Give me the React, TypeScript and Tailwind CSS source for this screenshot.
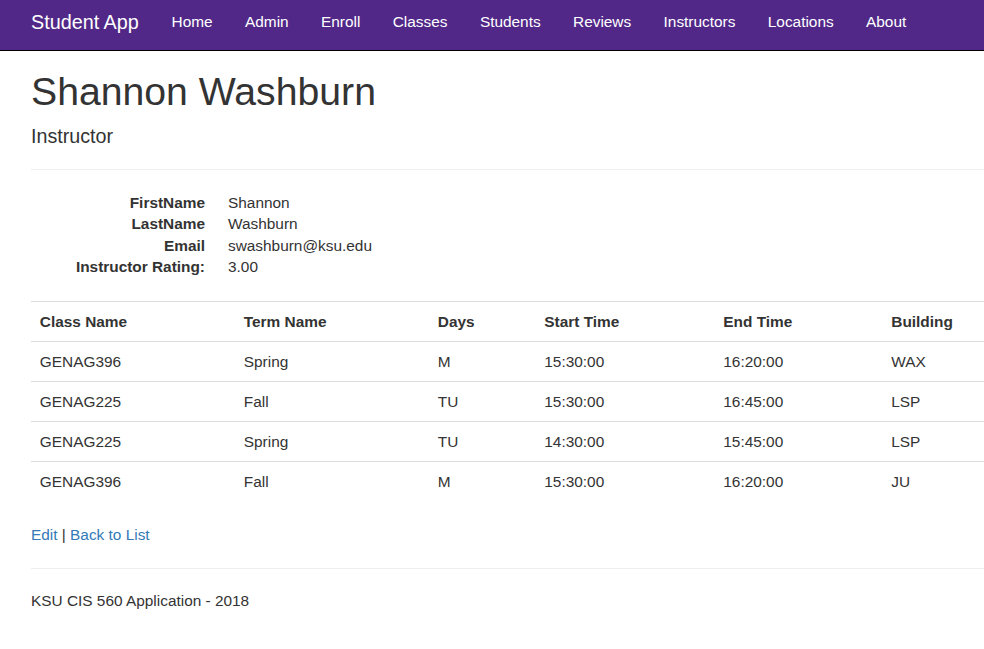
import React from "react";

const navItems = ["Home", "Admin", "Enroll", "Classes", "Students", "Reviews", "Instructors", "Locations", "About"];

const rows = [
  ["GENAG396", "Spring", "M", "15:30:00", "16:20:00", "WAX"],
  ["GENAG225", "Fall", "TU", "15:30:00", "16:45:00", "LSP"],
  ["GENAG225", "Spring", "TU", "14:30:00", "15:45:00", "LSP"],
  ["GENAG396", "Fall", "M", "15:30:00", "16:20:00", "JU"],
];

const headers = ["Class Name", "Term Name", "Days", "Start Time", "End Time", "Building"];
const widths = ["w-[204px]", "w-[194px]", "w-[106.5px]", "w-[179px]", "w-[168px]", ""];

export default function App() {
  return (
    <div
      className="min-h-screen w-full overflow-hidden bg-white text-[#333]"
      style={{ fontFamily: '"Liberation Sans", Arial, sans-serif' }}
    >
      <nav className="flex h-[51px] border-b border-black bg-[#512888] pl-[31px]">
        <div className="pt-[11px] pr-[16.6px] text-[19.8px] leading-[22px] text-white">Student App</div>
        <ul className="flex">
          {navItems.map((n) => (
            <li key={n} className="px-[16.2px] pt-[11px] text-[15.4px] leading-[22px] text-white">
              {n}
            </li>
          ))}
        </ul>
      </nav>

      <main className="pl-[31px] text-[15.4px]">
        <h1 className="mt-[19px] text-[39.2px] leading-[1.1]">Shannon Washburn</h1>
        <h4 className="mt-[12.7px] text-[19.7px] leading-[1.1]">Instructor</h4>
        <hr className="mt-[22px] border-t border-[#eee]" />

        <dl className="mt-[21.3px] grid grid-cols-[174px_1fr] gap-x-[23px] leading-[21.5px]">
          <dt className="text-right font-bold">FirstName</dt>
          <dd>Shannon</dd>
          <dt className="text-right font-bold">LastName</dt>
          <dd>Washburn</dd>
          <dt className="text-right font-bold">Email</dt>
          <dd>swashburn@ksu.edu</dd>
          <dt className="text-right font-bold">Instructor Rating:</dt>
          <dd>3.00</dd>
        </dl>

        <table className="mt-[23.5px] w-full table-fixed border-collapse text-left leading-[22px]">
          <thead>
            <tr className="border-t border-[#ddd]">
              {headers.map((h, i) => (
                <th key={h} className={`${widths[i]} px-[8.8px] py-[8.5px] font-bold`}>
                  {h}
                </th>
              ))}
            </tr>
          </thead>
          <tbody>
            {rows.map((r, ri) => (
              <tr key={ri} className="border-t border-[#ddd]">
                {r.map((c, ci) => (
                  <td key={ci} className="px-[8.8px] py-[8.5px]">
                    {c}
                  </td>
                ))}
              </tr>
            ))}
          </tbody>
        </table>

        <p className="mt-[22.3px] leading-[22px]">
          <a className="text-[#337ab7]">Edit</a> | <a className="text-[#337ab7]">Back to List</a>
        </p>

        <hr className="mt-[22.3px] border-t border-[#eee]" />
        <footer className="mt-[21px] leading-[22px]">
          <p>KSU CIS 560 Application - 2018</p>
        </footer>
      </main>
    </div>
  );
}
